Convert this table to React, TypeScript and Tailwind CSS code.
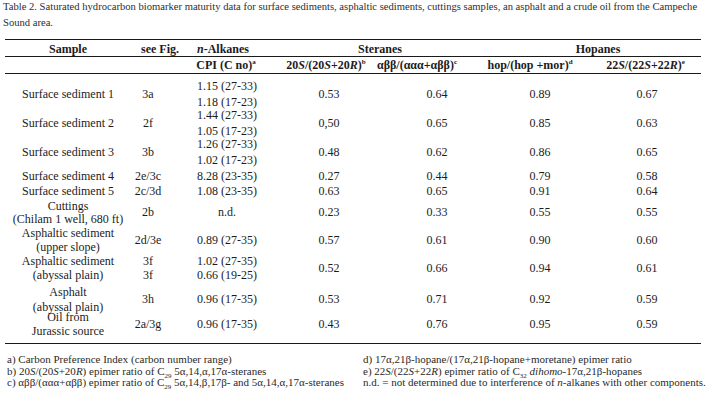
import React from "react";

const COLS = "grid grid-cols-[126px_44px_100px_102px_93px_120px_111px]";

type Row = {
  h: string;
  lh: string;
  sample: React.ReactNode;
  fig: React.ReactNode;
  alk: React.ReactNode;
  s1: string;
  s2: string;
  h1: string;
  h2: string;
};

const I = ({ children }: { children: React.ReactNode }) => <i>{children}</i>;
const Sp = ({ children }: { children: React.ReactNode }) => (
  <sup className="text-[7px] top-[-5px]">{children}</sup>
);
const Sb = ({ children }: { children: React.ReactNode }) => (
  <sub className="text-[7px] bottom-[-3px]">{children}</sub>
);

const rows: Row[] = [
  { h: "h-[29px] mt-[5px]", lh: "leading-[15.5px]", sample: "Surface sediment 1", fig: "3a", alk: <>1.15 (27-33)<br />1.18 (17-23)</>, s1: "0.53", s2: "0.64", h1: "0.89", h2: "0.67" },
  { h: "h-[29px]", lh: "leading-[15.5px]", sample: "Surface sediment 2", fig: "2f", alk: <>1.44 (27-33)<br />1.05 (17-23)</>, s1: "0,50", s2: "0.65", h1: "0.85", h2: "0.63" },
  { h: "h-[28px]", lh: "leading-[15.5px]", sample: "Surface sediment 3", fig: "3b", alk: <>1.26 (27-33)<br />1.02 (17-23)</>, s1: "0.48", s2: "0.62", h1: "0.86", h2: "0.65" },
  { h: "h-[15px] mt-[4px]", lh: "leading-[15px]", sample: "Surface sediment 4", fig: "2e/3c", alk: "8.28 (23-35)", s1: "0.27", s2: "0.44", h1: "0.79", h2: "0.58" },
  { h: "h-[15px]", lh: "leading-[15px]", sample: "Surface sediment 5", fig: "2c/3d", alk: "1.08 (23-35)", s1: "0.63", s2: "0.65", h1: "0.91", h2: "0.64" },
  { h: "h-[27px]", lh: "leading-[13px]", sample: <>Cuttings<br />(Chilam 1 well, 680 ft)</>, fig: "2b", alk: "n.d.", s1: "0.23", s2: "0.33", h1: "0.55", h2: "0.55" },
  { h: "h-[24px]", lh: "leading-[14px]", sample: <>Asphaltic sediment<br />(upper slope)</>, fig: "2d/3e", alk: "0.89 (27-35)", s1: "0.57", s2: "0.61", h1: "0.90", h2: "0.60" },
  { h: "h-[35px]", lh: "leading-[14px]", sample: <>Asphaltic sediment<br />(abyssal plain)</>, fig: <>3f<br />3f</>, alk: <>1.02 (27-35)<br />0.66 (19-25)</>, s1: "0.52", s2: "0.66", h1: "0.94", h2: "0.61" },
  { h: "h-[20px]", lh: "leading-[14.5px]", sample: <>Asphalt<br />(abyssal plain)</>, fig: "3h", alk: "0.96 (17-35)", s1: "0.53", s2: "0.71", h1: "0.92", h2: "0.59" },
  { h: "h-[38px]", lh: "leading-[14px]", sample: <>Oil from<br />Jurassic source</>, fig: "2a/3g", alk: "0.96 (17-35)", s1: "0.43", s2: "0.76", h1: "0.95", h2: "0.59" },
];

export default function App() {
  return (
    <div className="w-[706px] h-[408px] bg-white overflow-hidden [font-family:'Liberation_Serif','Times_New_Roman',serif] text-[#1c1c1c]">
      <p className="pl-[3px] text-[10.6px] leading-[15.5px] text-[#2e2e2e] whitespace-nowrap -mt-[1px]">
        Table 2. Saturated hydrocarbon biomarker maturity data for surface sediments, asphaltic sediments, cuttings samples, an asphalt and a crude oil from the Campeche
        <br />
        Sound area.
      </p>

      <div className="ml-[5px] w-[696px] mt-[9px] text-[12px]">
        <div className="border-t border-[#1a1a1a]" />
        <div className={`${COLS} h-[16px] items-center font-bold leading-[15px] whitespace-nowrap pt-[2px]`}>
          <div className="text-center">Sample</div>
          <div className="text-center pl-[10px]">see Fig.</div>
          <div className="text-center pr-[4px]"><I>n</I>-Alkanes</div>
          <div className="col-span-2 text-center pl-[15px]">Steranes</div>
          <div className="col-span-2 text-center pl-[25px]">Hopanes</div>
        </div>
        <div className="border-t border-[#1a1a1a]" />
        <div className={`${COLS} h-[16px] items-center font-bold leading-[15px] whitespace-nowrap pt-[1px]`}>
          <div />
          <div />
          <div className="text-center pl-[2px]">CPI (C no)<Sp>a</Sp></div>
          <div className="text-center">20<I>S</I>/(20<I>S</I>+20<I>R</I>)<Sp>b</Sp></div>
          <div className="text-center pr-[21px]">αββ/(ααα+αββ)<Sp>c</Sp></div>
          <div className="text-center">hop/(hop +mor)<Sp>d</Sp></div>
          <div className="text-center">22<I>S</I>/(22<I>S</I>+22<I>R</I>)<Sp>e</Sp></div>
        </div>
        <div className="border-t border-[#1a1a1a]" />

        {rows.map((r, i) => (
          <div key={i} className={`${COLS} ${r.h} ${r.lh} items-center whitespace-nowrap`}>
            <div className="text-center">{r.sample}</div>
            <div className="text-center pr-[10px]">{r.fig}</div>
            <div className="text-center pl-[4px]">{r.alk}</div>
            <div className="text-center pl-[6px]">{r.s1}</div>
            <div className="text-center pl-[27px]">{r.s2}</div>
            <div className="text-center pl-[20px]">{r.h1}</div>
            <div className="text-center pl-[3px]">{r.h2}</div>
          </div>
        ))}
        <div className="border-t border-[#1a1a1a]" />
      </div>

      <div className="mt-[10px] grid grid-cols-[356px_350px] text-[11px] leading-[11.5px] text-[#2a2a2a] whitespace-nowrap">
        <div className="pl-[7px]">
          <div>a) Carbon Preference Index (carbon number range)</div>
          <div>b) 20<I>S</I>/(20<I>S</I>+20<I>R</I>) epimer ratio of C<Sb>29</Sb> 5α,14,α,17α-steranes</div>
          <div>c) αββ/(ααα+αββ) epimer ratio of C<Sb>29</Sb> 5α,14,β,17β- and 5α,14,α,17α-steranes</div>
        </div>
        <div className="pl-[7px]">
          <div>d) 17α,21β-hopane/(17α,21β-hopane+moretane) epimer ratio</div>
          <div>e) 22<I>S</I>/(22<I>S</I>+22<I>R</I>) epimer ratio of C<Sb>32</Sb> <I>dihomo</I>-17α,21β-hopanes</div>
          <div>n.d. = not determined due to interference of <I>n</I>-alkanes with other components.</div>
        </div>
      </div>
    </div>
  );
}
